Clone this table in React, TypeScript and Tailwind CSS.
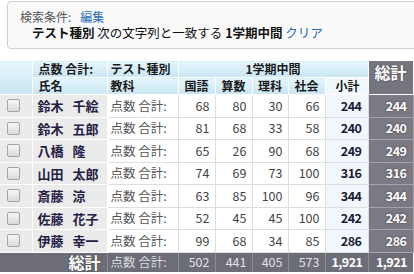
import React from 'react';

const rows = [
  { last: '鈴木', first: '千絵', s: [68, 80, 30, 66], sub: 244 },
  { last: '鈴木', first: '五郎', s: [81, 68, 33, 58], sub: 240 },
  { last: '八橋', first: '隆', s: [65, 26, 90, 68], sub: 249 },
  { last: '山田', first: '太郎', s: [74, 69, 73, 100], sub: 316 },
  { last: '斎藤', first: '涼', s: [63, 85, 100, 96], sub: 344 },
  { last: '佐藤', first: '花子', s: [52, 45, 45, 100], sub: 242 },
  { last: '伊藤', first: '幸一', s: [99, 68, 34, 85], sub: 286 },
];

const totals = [502, 441, 405, 573];

const hd = 'bg-gradient-to-b from-[#e6f5fc] to-[#c8e6f3] border border-white font-bold text-[#1a1a1a] text-[12px]';

function Checkbox() {
  return (
    <span className="block w-[13px] h-[13px] ml-[7px] rounded-[2px] border border-[#a3a3a3] bg-gradient-to-b from-[#f7f7f7] to-[#dadada]" />
  );
}

export default function App() {
  return (
    <div
      className="w-[414px] h-[274px] overflow-hidden bg-white text-[#333]"
      style={{ fontFamily: '"Noto Sans CJK JP", "Noto Sans", sans-serif' }}
    >
      <div className="ml-[7px] -mr-2 mt-[1px] h-[48px] rounded-[4px] border border-[#cfcfcf] bg-[#f9f9f9] pl-[12px] pt-[7px] leading-[15px]">
        <div className="text-[12px] text-[#555]">
          検索条件:<span className="ml-[9px] text-[#2a6cb8]">編集</span>
        </div>
        <div className="mt-[1px] pl-[12px] text-[12.5px] text-[#111]">
          <span className="font-bold">テスト種別</span> 次の文字列と一致する <span className="font-bold">1学期中間</span>{' '}
          <span className="text-[#2a6cb8]">クリア</span>
        </div>
      </div>

      <table className="mt-[11px] w-[413px] table-fixed border-collapse leading-none">
        <colgroup>
          <col className="w-[32px]" />
          <col className="w-[75px]" />
          <col className="w-[71px]" />
          <col className="w-[37px]" />
          <col className="w-[37px]" />
          <col className="w-[36px]" />
          <col className="w-[37px]" />
          <col className="w-[43px]" />
          <col className="w-[45px]" />
        </colgroup>
        <thead>
          <tr className="h-[17px]">
            <th rowSpan={2} className={`${hd} border-l-0`} />
            <th className={`${hd} text-left pl-[6px]`}>点数 合計:</th>
            <th className={`${hd} text-left pl-[3px]`}>テスト種別</th>
            <th colSpan={5} className={`${hd} text-center`}>1学期中間</th>
            <th
              rowSpan={2}
              className="bg-[#75757f] border border-white align-top pt-[3px] text-center text-[16px] font-bold text-white [text-shadow:0_0_2px_#444]"
            >
              総計
            </th>
          </tr>
          <tr className="h-[17px]">
            <th className={`${hd} text-left pl-[6px]`}>氏名</th>
            <th className={`${hd} text-left pl-[3px]`}>教科</th>
            <th className={`${hd} text-center`}>国語</th>
            <th className={`${hd} text-center`}>算数</th>
            <th className={`${hd} text-center`}>理科</th>
            <th className={`${hd} text-center`}>社会</th>
            <th className="bg-[#f0f8fd] border border-white font-bold text-[12px] text-[#1a1a1a] text-right pr-[8px]">
              小計
            </th>
          </tr>
        </thead>
        <tbody>
          {rows.map((r, idx) => (
            <tr key={idx} className="h-[22.5px]">
              <td className="bg-[#ebebeb] border-y border-white">
                <Checkbox />
              </td>
              <td className="bg-[#ebebeb] border border-white pl-[5px] text-[13px] font-bold text-[#252045]">
                <span className="inline-flex gap-[9px]">
                  <span>{r.last}</span>
                  <span>{r.first}</span>
                </span>
              </td>
              <td className="border border-[#dedede] pl-[3px] text-[12.5px] text-[#555]">点数 合計:</td>
              {r.s.map((v, i) => (
                <td key={i} className="border border-[#dedede] pr-[5px] text-right text-[12.5px] text-[#444]">
                  {v}
                </td>
              ))}
              <td className="bg-[#f2f7fd] border border-[#dedede] pr-[6px] text-right text-[12.5px] font-bold text-[#1c1c33] tracking-[-0.5px]">
                {r.sub}
              </td>
              <td className="bg-[#7a7a84] border border-[#a3a3ab] pr-[6px] text-right text-[12.5px] font-bold text-white tracking-[-0.5px] [text-shadow:0_0_2px_#333]">
                {r.sub}
              </td>
            </tr>
          ))}
          <tr className="h-[20px] bg-[#6d6d77]">
            <td
              colSpan={2}
              className="border-r border-[#8d8d96] pr-[6px] text-right text-[16px] font-bold text-white [text-shadow:0_0_2px_#333]"
            >
              総計
            </td>
            <td className="border-r border-[#8d8d96] pl-[3px] text-[12.5px] text-[#d8d8de]">点数 合計:</td>
            {totals.map((v, i) => (
              <td key={i} className="border-r border-[#8d8d96] pr-[5px] text-right text-[12.5px] text-[#e0e0e6]">
                {v}
              </td>
            ))}
            <td className="border-r border-[#8d8d96] pr-[5px] text-right text-[12.5px] font-bold text-white tracking-[-0.5px]">
              1,921
            </td>
            <td className="pr-[6px] text-right text-[12.5px] font-bold text-white tracking-[-0.5px]">1,921</td>
          </tr>
        </tbody>
      </table>
    </div>
  );
}
